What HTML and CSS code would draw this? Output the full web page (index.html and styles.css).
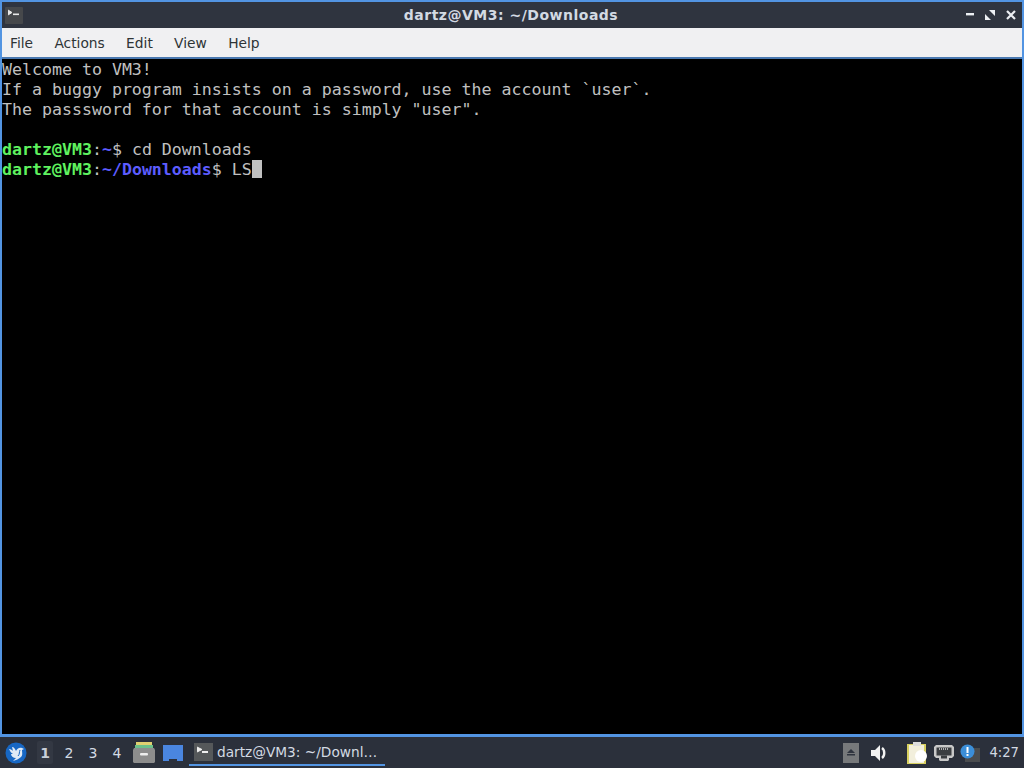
FILE: index.html
```html
<!DOCTYPE html>
<html lang="en">
<head>
<meta charset="utf-8">
<title>dartz@VM3: ~/Downloads</title>
<link rel="stylesheet" href="styles.css">
</head>
<body>
<div class="window">
  <header class="titlebar">
    <svg class="term-icon" width="18" height="17" viewBox="0 0 18 17"><rect width="18" height="17" rx="1" fill="#46484b"/><path d="M3 3l4 2.5L3 8" fill="#e8e8e8" stroke="#e8e8e8"/><rect x="8" y="6.5" width="6" height="1.6" fill="#e8e8e8"/></svg>
    <div class="title">dartz@VM3: ~/Downloads</div>
    <div class="controls">
      <svg width="8" height="3" viewBox="0 0 8 3"><rect width="8" height="2.4" fill="#eceff3"/></svg>
      <svg width="10" height="10" viewBox="0 0 10 10"><path d="M4 0h6v6zM0 4l6 6H0z" fill="#eceff3"/></svg>
      <svg width="10" height="10" viewBox="0 0 10 10"><path d="M1 1l8 8M9 1l-8 8" stroke="#eceff3" stroke-width="2.2"/></svg>
    </div>
  </header>
  <nav class="menubar">
    <span class="menu-item">File</span>
    <span class="menu-item">Actions</span>
    <span class="menu-item">Edit</span>
    <span class="menu-item">View</span>
    <span class="menu-item">Help</span>
  </nav>
  <main class="terminal">
    <div class="line">Welcome to VM3!</div>
    <div class="line">If a buggy program insists on a password, use the account `user`.</div>
    <div class="line">The passsword for that account is simply "user".</div>
    <div class="line">&nbsp;</div>
    <div class="line"><b class="green">dartz@VM3</b>:<b class="blue">~</b>$ cd Downloads</div>
    <div class="line"><b class="green">dartz@VM3</b>:<b class="blue">~/Downloads</b>$ LS<span class="cursor"></span></div>
  </main>
</div>
<footer class="panel">
  <svg class="logo" width="22" height="22" viewBox="0 0 22 22"><circle cx="11" cy="11" r="10.5" fill="#1767c4"/><path d="M4 7c2 0 3 1 4 2L7 5c2 0 3 2 4 4 1-2 3-4 6-3l2 1-2 1c0 3 1 5-1 7-2 2-5 3-8 4l3-3C8 16 6 14 6 12l2 0C6 11 5 9 4 7z" fill="#dfeaf6"/><path d="M15 8c-1 2 0 4-2 6" fill="none" stroke="#1767c4" stroke-width="1"/></svg>
  <div class="pager">
    <span class="page current"><span class="page-bg">1</span></span>
    <span class="page">2</span>
    <span class="page">3</span>
    <span class="page">4</span>
  </div>
  <svg class="launcher" width="22" height="22" viewBox="0 0 22 22"><rect x="3" y="0" width="16" height="3" fill="#e0d070"/><rect x="2" y="3" width="18" height="3" fill="#6cc08a"/><path d="M1 6h20l1 2v12l-1 1H1l-1-1V8z" fill="#8d8d8d"/><rect x="7" y="11" width="8" height="2.5" rx="1" fill="#eee"/></svg>
  <svg class="desktop" width="20" height="16" viewBox="0 0 20 16"><path d="M0 0h20v16h-6v-2H6v2H0z" fill="#4a86e0"/></svg>
  <div class="task">
    <svg width="19" height="18" viewBox="0 0 19 18"><rect width="19" height="18" fill="#55585a"/><path d="M3 4l5 2.5L3 9" fill="#eee" stroke="#eee"/><rect x="8" y="8" width="6" height="2" fill="#eee"/></svg>
    <span class="task-label">dartz@VM3: ~/Downl…</span>
  </div>
  <div class="tray">
    <svg class="tray-eject" width="16" height="20" viewBox="0 0 16 20"><rect width="16" height="20" fill="#77797b"/><path d="M4 10l4-4 4 4z" fill="#2f343f"/><rect x="4" y="11" width="8" height="1.5" fill="#2f343f"/></svg>
    <svg class="tray-sound" width="18" height="16" viewBox="0 0 18 16"><path d="M0 5h4l5-5v16l-5-5H0z" fill="#f2f2f2"/><path d="M11 3c3 2 3 8 0 10" fill="none" stroke="#f2f2f2" stroke-width="2.4"/></svg>
    <svg class="tray-clip" width="20" height="22" viewBox="0 0 20 22"><rect x="0" y="2" width="19" height="20" fill="#d8d060"/><rect x="2" y="3" width="15" height="18" fill="#f2efdc"/><rect x="6" y="0" width="8" height="4" fill="#ddd"/><circle cx="14" cy="14" r="6" fill="#fff"/></svg>
    <svg class="tray-net" width="20" height="16" viewBox="0 0 20 16"><path d="M2 0h16l2 2v9l-2 2h-3v2l-1 1H6l-1-1v-2H2l-2-2V2z" fill="#c8c8c8"/><rect x="2.5" y="2.5" width="15" height="8" fill="#3a3d40"/><path d="M5 4h10" stroke="#d8d8d8" stroke-width="1.5" stroke-dasharray="1 1"/><rect x="7" y="10.5" width="6" height="3" fill="#3a3d40"/></svg>
    <svg class="tray-info" width="20" height="18" viewBox="0 0 20 18"><rect x="5" y="4" width="15" height="14" fill="#4a4c4e"/><circle cx="7.5" cy="7.5" r="7" fill="#3b8ed8"/><rect x="6.5" y="3" width="2" height="6" fill="#fff"/><rect x="6.5" y="10" width="2" height="2" fill="#fff"/></svg>
    <span class="clock">4:27</span>
  </div>
</footer>
</body>
</html>
```
FILE: styles.css
```css
* { box-sizing: border-box; }
html, body { margin: 0; height: 100%; }
body {
  width: 1024px;
  height: 768px;
  overflow: hidden;
  display: flex;
  flex-direction: column;
  background: #2f343f;
  font-family: "DejaVu Sans", sans-serif;
}
.window {
  height: 737px;
  display: flex;
  flex-direction: column;
  border: 2px solid #5294e2;
  border-bottom-width: 3px;
}
.titlebar {
  height: 26px;
  flex: none;
  background: #2f343f;
  display: flex;
  align-items: center;
  padding-left: 3px;
  position: relative;
}
.term-icon { flex: none; }
.title {
  position: absolute;
  left: 0;
  right: 2px;
  text-align: center;
  color: #d3dae3;
  font-size: 14px;
  font-weight: 700;
  letter-spacing: 0.5px;
}
.controls {
  margin-left: auto;
  margin-bottom: 1px;
  display: flex;
  align-items: center;
  gap: 11px;
  padding-right: 6px;
  position: relative;
}
.menubar {
  height: 29px;
  flex: none;
  background: #f0f0f2;
  display: flex;
  align-items: center;
  gap: 21.3px;
  padding-left: 8px;
  color: #2e3436;
  font-size: 13.8px;
}
.terminal {
  flex: 1;
  background: #000;
  border-top: 2px solid #4a78b0;
  padding-top: 1px;
  color: #c0c0c0;
  font-family: "DejaVu Sans Mono", monospace;
  font-size: 16.6px;
  line-height: 20px;
}
.line { height: 20px; white-space: pre; }
.green { color: #5ff25f; font-weight: 700; }
.blue { color: #5c5cff; font-weight: 700; }
.cursor {
  display: inline-block;
  width: 10px;
  height: 18px;
  background: #c0c0c0;
  vertical-align: -3px;
}
.panel {
  height: 31px;
  flex: none;
  display: flex;
  align-items: center;
  background: #2b303b;
  color: #d3dae3;
  font-size: 14px;
}
.logo { margin-left: 5px; flex: none; }
.pager { display: flex; margin-left: 6px; }
.page {
  width: 24px;
  height: 29px;
  display: flex;
  align-items: center;
  justify-content: center;
}
.page-bg {
  width: 16px;
  height: 23px;
  display: flex;
  align-items: center;
  justify-content: center;
  background: #333843;
  border-radius: 2px;
}
.current { font-weight: 600; color: #c8ced8; }
.launcher { margin-left: 4px; flex: none; }
.desktop { margin-left: 8px; flex: none; }
.task {
  margin-left: 6px;
  width: 196px;
  height: 29px;
  margin-top: -2px;
  padding-top: 2px;
  display: flex;
  align-items: center;
  gap: 4px;
  padding-left: 5px;
  border-bottom: 2px solid #5294e2;
}
.task-label { white-space: nowrap; font-size: 13.7px; }
.tray {
  margin-left: auto;
  display: flex;
  align-items: center;
  padding-right: 5px;
}
.tray-sound { margin-left: 12px; }
.tray-clip { margin-left: 18px; }
.tray-net { margin-left: 7px; }
.tray-info { margin-left: 6px; }
.clock { margin-left: 9px; font-size: 13.2px; }
```
